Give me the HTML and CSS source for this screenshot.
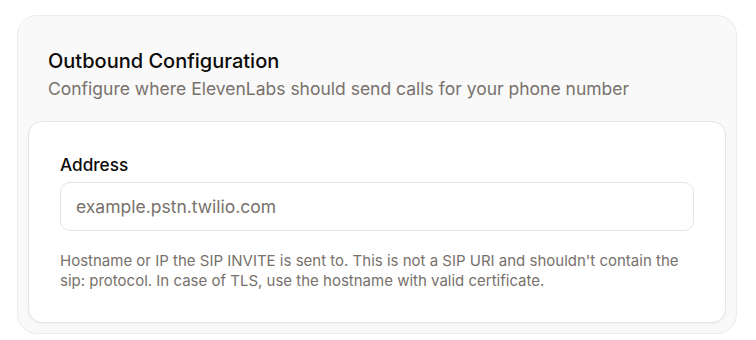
FILE: index.html
```html
<!DOCTYPE html>
<html lang="en">
<head>
<meta charset="utf-8">
<link rel="stylesheet" href="styles.css">
</head>
<body>
<section class="panel">
  <header class="panel-header">
    <h2 class="panel-title">Outbound Configuration</h2>
    <p class="panel-desc">Configure where ElevenLabs should send calls for your phone number</p>
  </header>
  <div class="panel-body">
    <label class="field-label" for="addr">Address</label>
    <input class="field-input" id="addr" type="text" placeholder="example.pstn.twilio.com">
    <p class="field-help">Hostname or IP the SIP INVITE is sent to. This is not a SIP URI and shouldn't contain the sip: protocol. In case of TLS, use the hostname with valid certificate.</p>
  </div>
</section>
</body>
</html>
```
FILE: styles.css
```css
* { box-sizing: border-box; }
html, body { margin: 0; background: #ffffff; }
body {
  font-family: Inter, "Noto Sans", sans-serif;
  padding: 15px 19px 7px 17px;
}
.panel {
  width: 720px;
  background: #f9f9f9;
  border: 1px solid #ececec;
  border-radius: 20px;
  padding: 10px;
}
.panel-header {
  padding: 21px 20px 20px 20px;
}
.panel-title {
  margin: 0;
  font-size: 20px;
  line-height: 28px;
  font-weight: 500;
  color: #0c0a09;
}
.panel-desc {
  margin: 2px 0 0;
  font-size: 17.5px;
  line-height: 24px;
  color: #78716c;
}
.panel-body {
  background: #ffffff;
  border: 1px solid #e7e5e4;
  border-radius: 14px;
  padding: 31px;
  box-shadow: 0 1px 2px rgba(0,0,0,0.05);
  display: flex;
  flex-direction: column;
}
.field-label {
  font-size: 17.2px;
  line-height: 24px;
  font-weight: 500;
  color: #0c0a09;
  margin-bottom: 5px;
}
.field-input {
  height: 49px;
  border: 1px solid #e7e5e4;
  border-radius: 10px;
  padding: 0 15px;
  font-family: inherit;
  font-size: 17.5px;
  color: #0c0a09;
  background: #fff;
  outline: none;
}
.field-input::placeholder { color: #78716c; }
.field-help {
  margin: 20px 0 0;
  font-size: 15px;
  line-height: 20px;
  color: #78716c;
}
```
